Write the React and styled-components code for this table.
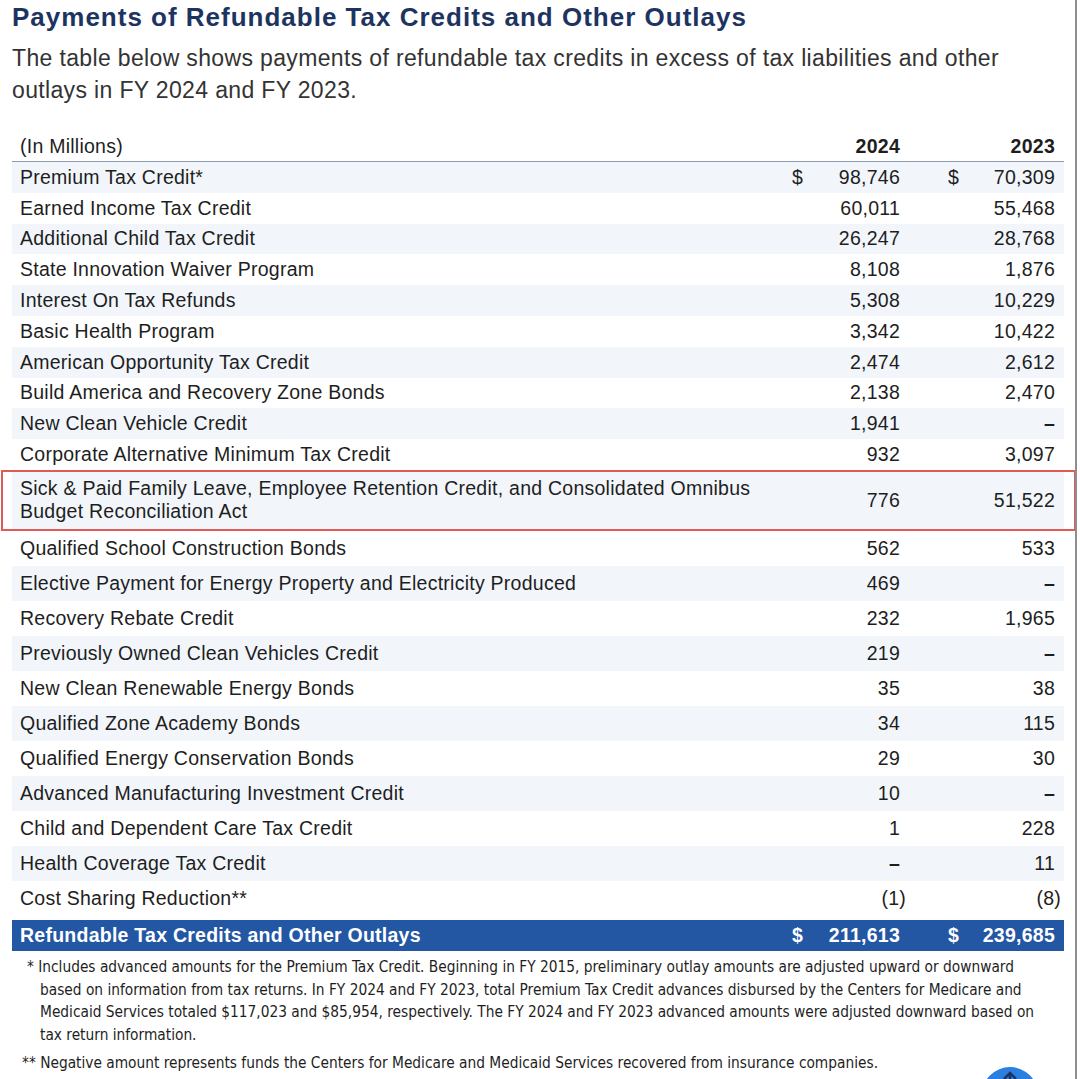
import React from "react";
import styled, { createGlobalStyle, css } from "styled-components";

const GlobalStyle = createGlobalStyle`
  html, body {
    margin: 0;
    padding: 0;
    background: #ffffff;
  }
  body {
    font-family: "Liberation Sans", Arial, sans-serif;
    color: #1e1e1e;
  }
`;

const Page = styled.div`
  width: 1077px;
  min-height: 1079px;
  border-right: 2px solid #8e8e8e;
  box-sizing: border-box;
  padding: 0 0 0 12px;
  overflow: hidden;
  position: relative;
`;

const Title = styled.h1`
  margin: 0;
  font-size: 26px;
  line-height: 34px;
  font-weight: 700;
  letter-spacing: 1px;
  color: #1d3461;
`;

const Intro = styled.p`
  margin: 8px 0 0;
  width: 1030px;
  font-size: 23px;
  line-height: 32px;
  letter-spacing: 0.35px;
  color: #333333;
`;

const Table = styled.div`
  width: 1052px;
  margin-top: 25px;
  font-size: 19.5px;
  letter-spacing: 0.25px;
`;

const Row = styled.div`
  display: grid;
  grid-template-columns: 1fr 110px 155px;
  align-items: center;
  padding: 0 9px 0 8px;
  height: ${(p) => p.h}px;
  position: relative;
  ${(p) =>
    p.striped &&
    css`
      background: #f2f6fb;
    `}
  ${(p) =>
    p.marked &&
    css`
      &::after {
        content: "";
        position: absolute;
        left: -11px;
        right: -12px;
        top: 0;
        bottom: 0;
        border: 2px solid #e05a5a;
      }
    `}
`;

const HeadRow = styled(Row)`
  border-bottom: 1.5px solid #8c9bb2;
`;

const Label = styled.div`
  line-height: 23px;
`;

const Cell = styled.div`
  display: flex;
  align-items: center;
  ${(p) =>
    p.second &&
    css`
      margin-left: 46px;
    `}
`;

const Dollar = styled.span`
  padding-left: 2px;
`;

const Amount = styled.span`
  margin-left: auto;
  font-weight: ${(p) => (p.bold ? 700 : "inherit")};
  margin-right: ${(p) => (p.neg ? "-6px" : "0")};
`;

const Total = styled(Row)`
  height: 31px;
  margin-top: 4px;
  background: #2356a3;
  color: #ffffff;
  font-weight: 700;
`;

const Notes = styled.div`
  margin-top: 5px;
  font-family: "Liberation Sans Narrow", "DejaVu Sans Condensed", "Liberation Sans", sans-serif;
  font-stretch: condensed;
  font-size: 15.3px;
  line-height: 22.7px;
  color: #1e1e1e;
  white-space: nowrap;
`;

const Note = styled.p`
  margin: 0 0 5px;
  padding-left: ${(p) => p.indent}px;
  text-indent: -${(p) => p.hang}px;
`;

const TopButton = styled.div`
  position: absolute;
  left: 982px;
  top: 1067px;
  width: 56px;
  height: 56px;
  border-radius: 50%;
  background: #2b7fe0;
  display: flex;
  justify-content: center;
  padding-top: 4px;
  box-sizing: border-box;
`;

const rows = [
  ["Premium Tax Credit*", "98,746", "70,309", true],
  ["Earned Income Tax Credit", "60,011", "55,468"],
  ["Additional Child Tax Credit", "26,247", "28,768"],
  ["State Innovation Waiver Program", "8,108", "1,876"],
  ["Interest On Tax Refunds", "5,308", "10,229"],
  ["Basic Health Program", "3,342", "10,422"],
  ["American Opportunity Tax Credit", "2,474", "2,612"],
  ["Build America and Recovery Zone Bonds", "2,138", "2,470"],
  ["New Clean Vehicle Credit", "1,941", "–"],
  ["Corporate Alternative Minimum Tax Credit", "932", "3,097"],
];

const lower = [
  ["Qualified School Construction Bonds", "562", "533"],
  ["Elective Payment for Energy Property and Electricity Produced", "469", "–"],
  ["Recovery Rebate Credit", "232", "1,965"],
  ["Previously Owned Clean Vehicles Credit", "219", "–"],
  ["New Clean Renewable Energy Bonds", "35", "38"],
  ["Qualified Zone Academy Bonds", "34", "115"],
  ["Qualified Energy Conservation Bonds", "29", "30"],
  ["Advanced Manufacturing Investment Credit", "10", "–"],
  ["Child and Dependent Care Tax Credit", "1", "228"],
  ["Health Coverage Tax Credit", "–", "11"],
  ["Cost Sharing Reduction**", "(1)", "(8)"],
];

function Values({ a, b, dollar }) {
  const neg = (v) => v.startsWith("(");
  return (
    <>
      <Cell>
        {dollar && <Dollar>$</Dollar>}
        <Amount bold={a === "–"} neg={neg(a)}>
          {a}
        </Amount>
      </Cell>
      <Cell second>
        {dollar && <Dollar>$</Dollar>}
        <Amount bold={b === "–"} neg={neg(b)}>
          {b}
        </Amount>
      </Cell>
    </>
  );
}

export default function App() {
  return (
    <Page>
      <GlobalStyle />
      <Title>Payments of Refundable Tax Credits and Other Outlays</Title>
      <Intro>
        The table below shows payments of refundable tax credits in excess of
        tax liabilities and other outlays in FY 2024 and FY 2023.
      </Intro>
      <Table>
        <HeadRow h={30}>
          <Label>(In Millions)</Label>
          <Cell>
            <Amount bold>2024</Amount>
          </Cell>
          <Cell second>
            <Amount bold>2023</Amount>
          </Cell>
        </HeadRow>
        {rows.map(([label, a, b, dollar], i) => (
          <Row key={label} h={30.8} striped={i % 2 === 0}>
            <Label>{label}</Label>
            <Values a={a} b={b} dollar={dollar} />
          </Row>
        ))}
        <Row h={61} striped marked>
          <Label>
            Sick &amp; Paid Family Leave, Employee Retention Credit, and
            Consolidated Omnibus
            <br />
            Budget Reconciliation Act
          </Label>
          <Values a="776" b="51,522" />
        </Row>
        {lower.map(([label, a, b], i) => (
          <Row key={label} h={35} striped={i % 2 === 1}>
            <Label>{label}</Label>
            <Values a={a} b={b} />
          </Row>
        ))}
        <Total h={31}>
          <Label>Refundable Tax Credits and Other Outlays</Label>
          <Values a="211,613" b="239,685" dollar />
        </Total>
      </Table>
      <Notes>
        <Note indent={28} hang={13}>
          * Includes advanced amounts for the Premium Tax Credit. Beginning in
          FY 2015, preliminary outlay amounts are adjusted upward or downward
          <br />
          based on information from tax returns. In FY 2024 and FY 2023, total
          Premium Tax Credit advances disbursed by the Centers for Medicare and
          <br />
          Medicaid Services totaled $117,023 and $85,954, respectively. The FY
          2024 and FY 2023 advanced amounts were adjusted downward based on
          <br />
          tax return information.
        </Note>
        <Note indent={28} hang={18}>
          ** Negative amount represents funds the Centers for Medicare and
          Medicaid Services recovered from insurance companies.
        </Note>
      </Notes>
      <TopButton>
        <svg width="16" height="20" viewBox="0 0 16 20">
          <path
            d="M8 2 L8 18 M2 8 L8 2 L14 8"
            fill="none"
            stroke="#1d3461"
            strokeWidth="2.5"
          />
        </svg>
      </TopButton>
    </Page>
  );
}
